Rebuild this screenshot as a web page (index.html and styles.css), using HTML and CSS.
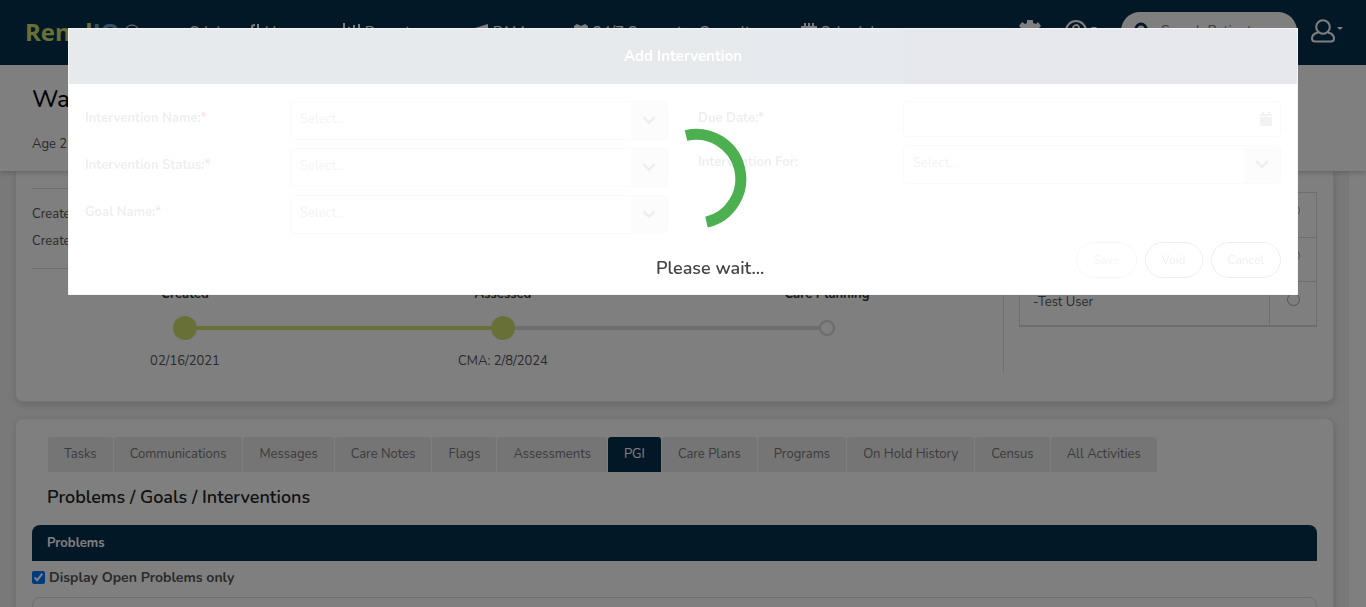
FILE: index.html
```html
<!DOCTYPE html>
<html lang="en">
<head>
<meta charset="utf-8">
<title>Add Intervention</title>
<link rel="stylesheet" href="styles.css">
</head>
<body>
<header class="topbar">
  <a class="brand" href="#"><span class="brand-a">Renal</span><span class="brand-b">IQ</span></a>
  <svg class="brand-mark" width="18" height="18" viewBox="0 0 18 18" aria-hidden="true"><circle cx="9" cy="9" r="7"/></svg>
  <nav class="mainnav">
    <a class="nav-inbox" href="#">Q Inbox</a>
    <a class="nav-home" href="#"><svg width="12" height="14" viewBox="0 0 12 14"><path d="M3 14V5q0-2 3-2M1 7h5M9 2v6"/></svg>Home</a>
    <a class="nav-reports" href="#"><svg width="18" height="14" viewBox="0 0 18 14"><path d="M1 1v13M6 5v9M11 3v11M16 2v12"/></svg>Reports</a>
    <a class="nav-pal" href="#"><svg width="14" height="14" viewBox="0 0 14 14"><path class="solid" d="M0 6L13 2v12L1 10z"/></svg>PAM</a>
    <a class="nav-support" href="#"><svg width="16" height="15" viewBox="0 0 16 15"><path class="solid" d="M8 15L1 8V4l3-2 4 2 4-2 3 2v4z"/></svg>24/7 Support</a>
    <a class="nav-consult" href="#">Consults</a>
    <a class="nav-schedule" href="#"><svg width="16" height="16" viewBox="0 0 16 16"><path d="M1 5h14v10H1zM4 1v4M8 1v4M12 1v4"/></svg>Schedule</a>
  </nav>
  <div class="tools">
    <button class="tool" aria-label="Settings"><svg width="22" height="22" viewBox="0 0 22 22"><path class="solid" d="M8 3V0h6v3l3 1 2-2 3 4-2 2v6l2 2-3 4-3-2-2 1v3H8v-3l-3-1-2 2-3-4 2-2V8L0 6l3-4 3 2z"/></svg></button>
    <button class="tool help" aria-label="Help"><svg width="34" height="22" viewBox="0 0 34 22"><circle cx="11" cy="11" r="10"/><path d="M8 9c0-5 6-5 6-1 0 3-3 3-3 6M11 16v2"/><path class="solid" d="M26 7h6l-3 3z"/></svg></button>
    <label class="search"><svg width="17" height="17" viewBox="0 0 17 17"><circle cx="7" cy="7" r="5"/><path d="M11 11l5 5"/></svg><input type="search" placeholder="Search Patient" aria-label="Search Patient"></label>
    <button class="tool" aria-label="Account"><svg width="32" height="24" viewBox="0 0 32 24"><circle cx="12" cy="8" r="6.800"/><path d="M7 13.500c-4 1-6 3-6 6 0 2 1 3 3 3h16c2 0 3-1 3-3 0-3-2-5-6-6"/><path class="solid" d="M26 8h6l-3 3z"/></svg></button>
  </div>
</header>
<section class="patient">
  <h1>Wa</h1>
  <p>Age 2</p>
</section>
<main class="page">
  <section class="card overview">
    <div class="progress">
      <div class="facts"><p>Create</p><p>Create</p></div>
      <ol class="steps">
        <li class="done"><b>Created</b><span class="dot"></span><span>02/16/2021</span></li>
        <li class="done last"><b>Assessed</b><span class="dot"></span><span>CMA: 2/8/2024</span></li>
        <li><b>Care Planning</b><span class="dot"></span></li>
      </ol>
    </div>
    <table class="team">
      <tbody>
        <tr><td></td><td><input type="radio" name="member" aria-label="First member"></td></tr>
        <tr><td></td><td><input type="radio" name="member" aria-label="Second member"></td></tr>
        <tr><td>-Test User</td><td><input type="radio" name="member" aria-label="Third member"></td></tr>
      </tbody>
    </table>
  </section>
  <section class="card records">
    <nav class="tabs">
      <a href="#">Tasks</a><a href="#">Communications</a><a href="#">Messages</a><a href="#">Care Notes</a><a href="#">Flags</a><a href="#">Assessments</a><a class="active" href="#">PGI</a><a href="#">Care Plans</a><a href="#">Programs</a><a href="#">On Hold History</a><a href="#">Census</a><a href="#">All Activities</a>
    </nav>
    <h2>Problems / Goals / Interventions</h2>
    <h3>Problems</h3>
    <label class="open-only"><input type="checkbox" checked>Display Open Problems only</label>
    <div class="list"></div>
  </section>
</main>
<div class="backdrop">
  <div class="dialog" role="dialog" aria-labelledby="dialog-title">
    <form class="form">
      <h2 class="dialog-title" id="dialog-title">Add Intervention</h2>
      <div class="fields">
        <div class="column">
          <div class="field"><label for="name">Intervention Name:<i>*</i></label><div class="select"><select id="name"><option>Select...</option></select><svg width="14" height="10" viewBox="0 0 14 10"><path d="M2 2l5 5 5-5"/></svg></div></div>
          <div class="field"><label for="status">Intervention Status:<i>*</i></label><div class="select"><select id="status"><option>Select...</option></select><svg width="14" height="10" viewBox="0 0 14 10"><path d="M2 2l5 5 5-5"/></svg></div></div>
          <div class="field"><label for="goal">Goal Name:<i>*</i></label><div class="select"><select id="goal"><option>Select...</option></select><svg width="14" height="10" viewBox="0 0 14 10"><path d="M2 2l5 5 5-5"/></svg></div></div>
        </div>
        <div class="column">
          <div class="field"><label for="due">Due Date:<i>*</i></label><div class="date"><input id="due" type="text"><svg width="12" height="14" viewBox="0 0 12 14"><path d="M1 2h1V0h2v2h4V0h2v2h1l1 1v1H0V3zM0 5h12v8l-1 1H1l-1-1z"/></svg></div></div>
          <div class="field"><label for="for">Intervention For:</label><div class="select"><select id="for"><option>Select...</option></select><svg width="14" height="10" viewBox="0 0 14 10"><path d="M2 2l5 5 5-5"/></svg></div></div>
        </div>
      </div>
      <div class="actions"><button type="button" class="save" disabled>Save</button><button type="button">Void</button><button type="button">Cancel</button></div>
    </form>
    <div class="loading" role="status">
      <svg width="104" height="104" viewBox="11 0 104 104"><path d="M41 8.500A44.500 44.500 0 0 1 61.500 95.200"/></svg>
      <p>Please wait...</p>
    </div>
  </div>
</div>
</body>
</html>
```
FILE: styles.css
```css
* { box-sizing: border-box; }
body, h1, h2, h3, p, ol { margin: 0; padding: 0; }
body { display: flex; flex-direction: column; height: 100vh; overflow: hidden; background: #fff; color: #555; font: 13px/20px Nunito, Lato, "Open Sans", sans-serif; }
a { color: inherit; text-decoration: none; }
button, input, select { font: inherit; color: inherit; }
svg { flex: none; fill: none; stroke: currentColor; stroke-width: 2; }
.solid { fill: currentColor; stroke: none; }
.topbar { display: flex; flex: none; align-items: center; height: 65px; padding: 0 23px 4px 25px; background: #07304e; color: #fff; }
.brand { padding-top: 2px; font: bold 24px/30px "Open Sans", sans-serif; }
.brand-a { color: #d0e070; }
.brand-b { color: #6c9fd0; }
.brand-mark { margin-left: 3px; margin-top: 2px; stroke-width: 1; }
.mainnav { display: flex; flex: 1; font-size: 15px; padding-top: 2px; padding-left: 48px; }
.mainnav a { display: flex; gap: 4px; white-space: nowrap; }
.nav-inbox { width: 60px; }
.nav-home { width: 94px; }
.nav-reports { width: 132px; }
.nav-pal { width: 98px; }
.nav-support { width: 126px; }
.nav-consult { width: 102px; }
.tools { display: flex; align-items: center; gap: 14px; }
.tool { display: flex; padding: 0; border: 0; background: none; }
.tool.help { margin-left: 10px; margin-right: 8px; }
.search { display: flex; align-items: center; gap: 10px; width: 176px; height: 38px; padding: 0 13px; border-radius: 20px; background: #fff; color: #07304e; }
.search svg { stroke-width: 3; }
.search input { width: 118px; padding: 0; border: 0; outline: 0; background: none; font-size: 14px; }
.search input::placeholder { color: #777; }
.patient { position: relative; flex: none; height: 106px; padding: 18px 32px; background: #fff; box-shadow: 0 2px 5px #0003; }
.patient h1 { color: #000; font-size: 24px; line-height: 32px; font-weight: 500; }
.patient p { margin-top: 19px; }
.page { flex: 1; min-height: 0; overflow: hidden; margin-right: 17px; padding: 0 15px; background: #f2f2f2; }
.card { border: 1px solid #e6e6e6; background: #fff; box-shadow: 1px 3px 7px #0002; }
.overview { display: flex; height: 231px; padding: 17px 16px 28px; border-top: 0; border-radius: 0 0 8px 8px; }
.progress { flex: 1; margin-right: 15px; border-right: 1px solid #e0e0e0; }
.facts { height: 81px; padding-top: 15px; border: solid #ddd; border-width: 1px 0; }
.facts p + p { margin-top: 7px; }
.steps { display: flex; padding-top: 15px; list-style: none; }
.steps li { position: relative; display: flex; flex: 0 0 318px; flex-direction: column; align-items: center; text-align: center; }
.steps li:first-child { margin-left: -6px; }
.steps li:last-child { flex-basis: 330px; }
.steps b { color: #333; }
.dot { z-index: 1; width: 16px; height: 16px; margin: 16px 0; border: 2px solid #d8d8d8; border-radius: 50%; background: #fff; }
.done .dot { width: 24px; height: 24px; margin: 12px 0 11px; border: 0; background: #d0e070; }
.done::after { content: ""; position: absolute; left: 50%; top: 42px; width: 100%; height: 4px; background: #d0e070; }
.done.last::after { background: #dcdcdc; }
.team { width: 298px; height: 135px; margin-top: 4px; align-self: flex-start; border-collapse: collapse; }
.team td { height: 44px; padding: 0 13px 3px; border: 1px solid #ddd; }
.team tr:last-child td { border-bottom: 2px solid #ddd; }
.team td:last-child { width: 47px; text-align: center; }
.team input { width: 13px; height: 13px; margin: 0; appearance: none; border: 1px solid #aaa; border-radius: 50%; }
.records { margin-top: 16px; padding: 18px 16px; border-radius: 8px 8px 0 0; }
.tabs { display: flex; gap: 1px; padding-left: 16px; }
.tabs a { padding: 7px 16px 8px; border-radius: 3px 3px 0 0; background: #eaeaea; color: #777; }
.tabs .active { background: #07304e; color: #fff; }
.records h2 { padding: 13px 15px 16px; color: #222; font-size: 18px; line-height: 24px; font-weight: 600; }
.records h3 { height: 36px; padding: 8px 15px; border-radius: 8px 8px 0 0; background: #07304e; color: #fff; font-size: 13px; line-height: 20px; }
.open-only { display: flex; align-items: center; gap: 4px; height: 36px; padding-bottom: 2px; font-weight: bold; font-size: 14px; }
.open-only input { width: 13px; height: 13px; margin: 0 0 2px; }
.list { height: 40px; border: 1px solid #ddd; border-radius: 8px; }
.backdrop { position: fixed; inset: 0; z-index: 5; padding: 28px 68px; background: #00000080; }
.dialog { position: relative; border: 1px solid #f5f5f5; background: #fff; }
.form { opacity: .1; }
.dialog-title { height: 55px; background: linear-gradient(90deg, #052c44 50%, #00184a 75%); color: #fff; font-size: 15px; line-height: 54px; text-align: center; }
.fields { display: grid; grid-template-columns: 1fr 1fr; gap: 30px; padding: 17px 16px 0; }
.column { display: flex; flex-direction: column; gap: 8px; }
.field { display: flex; }
.field label { flex: 1; padding-top: 7px; font-weight: bold; }
.field i { color: red; font-style: normal; }
.select, .date { position: relative; flex: none; width: 378px; height: 39px; border: 1px solid #ccc; border-radius: 4px; }
.date { height: 36px; }
.select select, .date input { width: 100%; height: 100%; padding: 0 9px 4px; border: 0; background: none; appearance: none; color: #888; }
.select svg { position: absolute; right: 0; top: 0; width: 36px; height: 100%; padding: 12px 10px; background: #ddd; }
.date svg { position: absolute; right: 8px; top: 10px; fill: #777; stroke: none; }
.actions { display: flex; justify-content: flex-end; gap: 8px; padding: 8px 16px 16px; }
.actions button { height: 36px; padding: 0 16px; border: 1px solid #555; border-radius: 18px; background: #fff; color: #555; font-size: 12px; }
.actions .save { opacity: .5; }
.loading { position: absolute; left: 587px; top: 98px; color: #444; }
.loading svg { display: block; stroke: #4caf50; stroke-width: 11; }
.loading p { margin-top: 25px; font-size: 18px; line-height: 24px; font-weight: 600; }
```
